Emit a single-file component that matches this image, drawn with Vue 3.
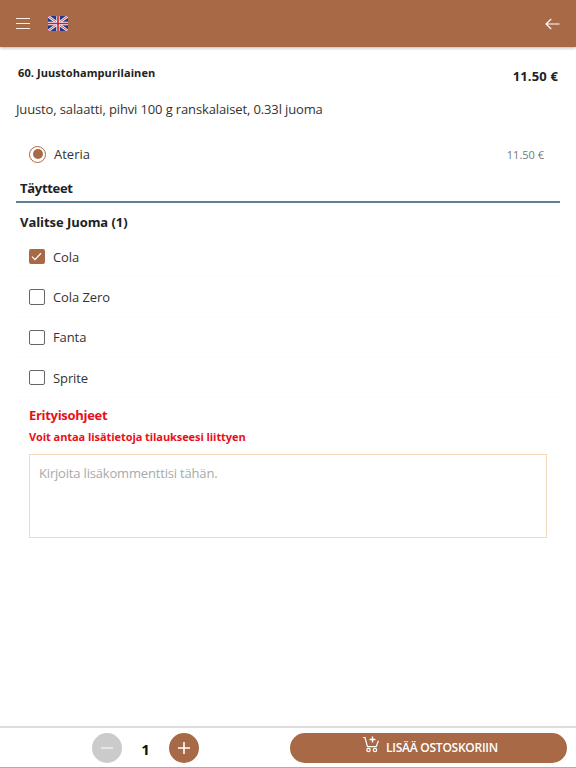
<script setup>
const drinks = [
  { name: "Cola", checked: true },
  { name: "Cola Zero", checked: false },
  { name: "Fanta", checked: false },
  { name: "Sprite", checked: false },
];
</script>

<template>
  <div class="page">
    <header class="topbar">
      <svg class="menu" width="14" height="13" viewBox="0 0 14 13">
        <path d="M0 1.5h14M0 6.5h14M0 11.5h14" stroke="#fdeee4" stroke-width="1" fill="none" />
      </svg>
      <svg class="flag" width="20" height="15" viewBox="0 0 20 15">
        <rect width="20" height="15" fill="#27397c" />
        <path d="M0 0l20 15M20 0L0 15" stroke="#f2f2f6" stroke-width="2.6" />
        <path d="M0 0l20 15M20 0L0 15" stroke="#c8202f" stroke-width="0.8" />
        <path d="M10 0v15M0 7.5h20" stroke="#f2f2f6" stroke-width="3.4" />
        <path d="M10 0v15M0 7.5h20" stroke="#c8202f" stroke-width="1.6" />
      </svg>
      <svg class="back" width="15" height="12" viewBox="0 0 15 12">
        <path d="M14.5 6H1M6.2 1L1 6l5.2 5" stroke="#fff" stroke-width="1.2" fill="none" />
      </svg>
    </header>

    <main class="content">
      <div class="title-row">
        <h1>60. Juustohampurilainen</h1>
        <span class="price">11.50 €</span>
      </div>
      <p class="desc">Juusto, salaatti, pihvi 100 g ranskalaiset, 0.33l juoma</p>

      <div class="option">
        <span class="radio"><span class="dot"></span></span>
        <span class="option-name">Ateria</span>
        <span class="option-price">11.50 €</span>
      </div>

      <h2 class="section">Täytteet</h2>
      <h3 class="group">Valitse Juoma (1)</h3>

      <ul class="drinks">
        <li v-for="drink in drinks" :key="drink.name">
          <span class="box" :class="{ checked: drink.checked }">
            <svg v-if="drink.checked" width="11" height="9" viewBox="0 0 11 9">
              <path d="M1 4.6l3 3L10 1.2" stroke="#fff" stroke-width="1.3" fill="none" />
            </svg>
          </span>
          <span>{{ drink.name }}</span>
        </li>
      </ul>

      <div class="notes">
        <div class="notes-title">Erityisohjeet</div>
        <div class="notes-sub">Voit antaa lisätietoja tilaukseesi liittyen</div>
        <div class="textarea">Kirjoita lisäkommenttisi tähän.</div>
      </div>
    </main>

    <footer class="bottombar">
      <div class="qty">
        <span class="round minus">
          <svg width="14" height="14" viewBox="0 0 14 14"><path d="M1 7h12" stroke="#eee" stroke-width="1.6" /></svg>
        </span>
        <span class="count">1</span>
        <span class="round plus">
          <svg width="14" height="14" viewBox="0 0 14 14"><path d="M1 7h12M7 1v12" stroke="#fff" stroke-width="1.6" /></svg>
        </span>
      </div>
      <button class="add">
        <svg width="19" height="17" viewBox="0 0 19 17">
          <path d="M1 1.5h2l2.4 9.2h8.8l2.2-6" stroke="#fff" stroke-width="1.2" fill="none" />
          <path d="M10.5 0.5v6M7.5 3.5h6" stroke="#fff" stroke-width="1.4" fill="none" />
          <circle cx="6.5" cy="14" r="1.7" stroke="#fff" stroke-width="1.2" fill="none" />
          <circle cx="13" cy="14" r="1.7" stroke="#fff" stroke-width="1.2" fill="none" />
        </svg>
        <span>LISÄÄ OSTOSKORIIN</span>
      </button>
    </footer>
  </div>
</template>

<style>
body {
  margin: 0;
  background: #fff;
}
</style>

<style scoped>
.page {
  width: 576px;
  height: 768px;
  display: flex;
  flex-direction: column;
  overflow: hidden;
  font-family: "Open Sans", "Noto Sans", sans-serif;
  color: #333;
}

.topbar {
  height: 47px;
  flex: none;
  display: flex;
  align-items: center;
  padding: 0 16px;
  box-sizing: border-box;
  background: #a76946;
  box-shadow: 0 1px 3px rgba(0, 0, 0, 0.3);
}

.menu {
  margin-right: 18px;
}

.back {
  margin-left: auto;
}

.content {
  flex: 1;
  padding: 0 16px;
}

.title-row {
  display: flex;
  justify-content: space-between;
  padding: 19px 2px 0;
  height: 32px;
}

h1 {
  margin: 0;
  font-size: 11px;
  line-height: 14px;
  font-weight: 700;
  letter-spacing: 0.09px;
  color: #222;
}

.price {
  font-size: 13px;
  line-height: 20px;
  font-weight: 700;
  letter-spacing: 0.15px;
  color: #222;
}

.desc {
  margin: 0;
  padding-top: 1px;
  font-size: 13px;
  line-height: 20px;
  letter-spacing: -0.13px;
}

.option {
  display: flex;
  align-items: center;
  height: 24px;
  margin-top: 23px;
  padding: 0 16px 0 13px;
  font-size: 13px;
}

.radio {
  width: 17px;
  height: 17px;
  box-sizing: border-box;
  border: 1.5px solid #a76946;
  border-radius: 50%;
  display: flex;
  align-items: center;
  justify-content: center;
  margin-right: 8px;
}

.dot {
  width: 10px;
  height: 10px;
  border-radius: 50%;
  background: #a76946;
}

.option-price {
  margin-left: auto;
  font-size: 11px;
  color: #777;
}

.section {
  margin: 12px 0 0;
  padding: 0 4px 3px;
  font-size: 13px;
  line-height: 20px;
  font-weight: 700;
  letter-spacing: -0.3px;
  color: #222;
  border-bottom: 2px solid #5f7f95;
}

.group {
  margin: 0;
  padding: 9px 4px 0;
  font-size: 13px;
  line-height: 20px;
  font-weight: 700;
  letter-spacing: -0.06px;
  color: #222;
}

.drinks {
  list-style: none;
  margin: 5px 0 0;
  padding: 0;
}

.drinks li {
  display: flex;
  align-items: center;
  height: 40.33px;
  padding-left: 13px;
  box-sizing: border-box;
  font-size: 13px;
  letter-spacing: -0.1px;
  border-bottom: 1px solid #fcfcfc;
}

.box {
  width: 15.5px;
  height: 15.5px;
  box-sizing: border-box;
  border: 1.5px solid #666;
  border-radius: 2px;
  margin-right: 8.5px;
  display: flex;
  align-items: center;
  justify-content: center;
}

.box.checked {
  border: none;
  background: #a76946;
}

.notes {
  padding: 7px 13px 0;
  color: #e8101a;
  font-weight: 700;
}

.notes-title {
  font-size: 13px;
  line-height: 20px;
  letter-spacing: -0.3px;
}

.notes-sub {
  font-size: 11px;
  line-height: 16px;
  margin-top: 4px;
  letter-spacing: -0.07px;
}

.textarea {
  margin-top: 9px;
  height: 84px;
  box-sizing: border-box;
  padding: 8px 9px 0 9px;
  border: 1px solid #f6d9bd;
  font-size: 13px;
  line-height: 20px;
  font-weight: 400;
  letter-spacing: -0.18px;
  color: #a9a9a9;
}

.bottombar {
  height: 42px;
  flex: none;
  display: flex;
  align-items: center;
  box-sizing: border-box;
  border-top: 2px solid #ddd;
  border-bottom: 1px solid #c9a58e;
  padding: 0 9px 0 92px;
}

.qty {
  display: flex;
  align-items: center;
}

.round {
  width: 30px;
  height: 30px;
  border-radius: 50%;
  display: flex;
  align-items: center;
  justify-content: center;
}

.minus {
  background: #cbcbcb;
}

.plus {
  background: #a76946;
}

.count {
  width: 47px;
  padding-top: 3px;
  text-align: center;
  font-size: 15px;
  font-weight: 700;
  color: #111;
}

.add {
  margin-left: auto;
  width: 277px;
  height: 30px;
  padding: 0 0 0 3px;
  border: none;
  border-radius: 15px;
  background: #a76946;
  color: #fff;
  font-family: inherit;
  font-size: 12px;
  font-weight: 600;
  letter-spacing: -0.25px;
  display: flex;
  align-items: center;
  justify-content: center;
  gap: 5px;
}

.add svg {
  margin-top: -6px;
}
</style>
